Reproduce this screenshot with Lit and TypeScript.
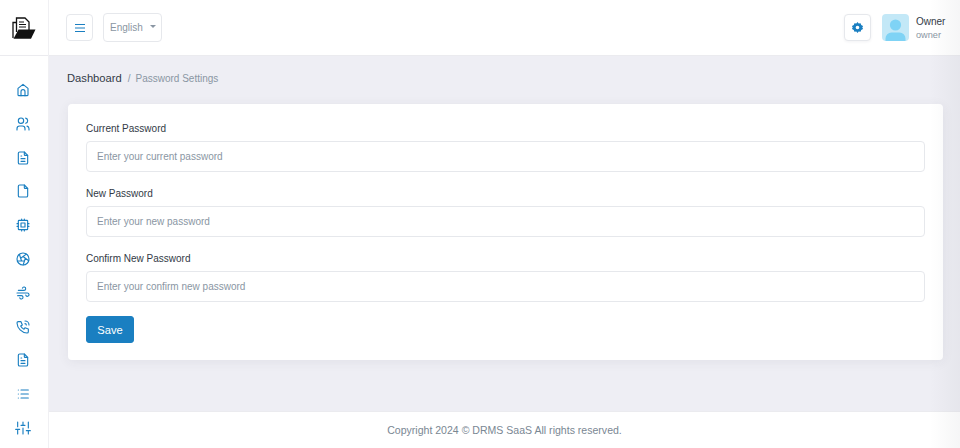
import { LitElement, html, css, svg } from 'lit';
import { customElement } from 'lit/decorators.js';

const fileText = svg`<path d="M14 3v4a1 1 0 0 0 1 1h4"/><path d="M17 21H7a2 2 0 0 1-2-2V5a2 2 0 0 1 2-2h7l5 5v11a2 2 0 0 1-2 2z"/><path d="M9 9h1M9 13h6M9 17h6"/>`;

// sidebar icons, 24 unit stroke paths
const navIcons = [
  svg`<path d="M12 3.500 4.500 9.500V19A1.500 1.500 0 0 0 6 20.500h12a1.500 1.500 0 0 0 1.500-1.500V9.500z"/><path d="M9 20.500v-6a3 3 0 0 1 6 0v6"/>`,
  svg`<circle cx="9" cy="7" r="4"/><path d="M3 21v-2a4 4 0 0 1 4-4h4a4 4 0 0 1 4 4v2"/><path d="M16 3.130a4 4 0 0 1 0 7.750"/><path d="M21 21v-2a4 4 0 0 0-3-3.850"/>`,
  fileText,
  svg`<path d="M14 3v4a1 1 0 0 0 1 1h4"/><path d="M17 21H7a2 2 0 0 1-2-2V5a2 2 0 0 1 2-2h7l5 5v11a2 2 0 0 1-2 2z"/>`,
  svg`<rect x="5" y="5" width="14" height="14" rx="1"/><path d="M9 9h6v6H9z"/><path d="M3 10h2M3 14h2M10 3v2M14 3v2M21 10h-2M21 14h-2M14 21v-2M10 21v-2"/>`,
  svg`<circle cx="12" cy="12" r="9"/><path d="M3.600 15h10.550M6.551 4.938l3.260 10.034M17.032 4.636l-8.535 6.201M20.559 14.510l-8.535-6.201M12.257 20.916l3.261-10.034"/>`,
  svg`<path d="M5 8h8.500a2.500 2.500 0 1 0-2.340-3.240"/><path d="M3 12h15.500a2.500 2.500 0 1 1-2.340 3.240"/><path d="M4 16h5.500a2.500 2.500 0 1 1-2.340 3.240"/>`,
  svg`<path d="M5 4h4l2 5-2.500 1.500a11 11 0 0 0 5 5l1.500-2.500 5 2v4a2 2 0 0 1-2 2A16 16 0 0 1 3 6a2 2 0 0 1 2-2"/><path d="M15 7a2 2 0 0 1 2 2M15 3a6 6 0 0 1 6 6"/>`,
  fileText,
  svg`<path d="M9 6h11M9 12h11M9 18h11M5 6v.010M5 12v.010M5 18v.010"/>`,
  svg`<path d="M4 21v-7M4 10V3M12 21v-9M12 8V3M20 21v-5M20 12V3M1 14h6M9 8h6M17 16h6"/>`,
];

const fields = [
  { label: 'Current Password', hint: 'Enter your current password' },
  { label: 'New Password', hint: 'Enter your new password' },
  { label: 'Confirm New Password', hint: 'Enter your confirm new password' },
];

@customElement('app-root')
export class AppRoot extends LitElement {
  static styles = css`
    :host {
      display: block;
      position: relative;
      width: 960px;
      height: 448px;
      overflow: hidden;
      font-family: 'Liberation Sans', Arial, sans-serif;
      background: #eeeef4;
    }
    * {
      box-sizing: border-box;
    }
    .layout {
      display: flex;
      height: 448px;
    }

    .sidebar {
      width: 49px;
      flex: none;
      background: #fff;
      border-right: 1px solid #f0f0f3;
      display: flex;
      flex-direction: column;
    }
    .brand {
      height: 56px;
      flex: none;
      border-bottom: 1px solid #ebebef;
      display: flex;
      align-items: center;
      justify-content: center;
    }
    .brand svg {
      width: 24px;
      height: 22px;
    }
    .nav {
      display: flex;
      flex-direction: column;
      align-items: center;
      gap: 17.800px;
      padding-top: 26px;
      padding-right: 3px;
    }
    .nav svg {
      width: 16px;
      height: 16px;
      fill: none;
      stroke: #1a7fc1;
      stroke-width: 1.700;
      stroke-linecap: round;
      stroke-linejoin: round;
      display: block;
    }

    .main {
      flex: 1;
      min-width: 0;
      display: flex;
      flex-direction: column;
    }
    .topbar {
      height: 56px;
      flex: none;
      background: #fff;
      border-bottom: 1px solid #ebebef;
      display: flex;
      align-items: center;
      padding: 0 15px 0 17px;
    }
    .menu {
      width: 27px;
      height: 27px;
      border: 1px solid #e6e8ec;
      border-radius: 4px;
      background: #fff;
      display: flex;
      align-items: center;
      justify-content: center;
      padding: 0;
    }
    .menu svg {
      width: 12px;
      height: 10px;
      stroke: #1a7fc1;
      stroke-width: 1.200;
    }
    .lang {
      margin-left: 10px;
      width: 59px;
      height: 29px;
      border: 1px solid #e6e8ec;
      border-radius: 4px;
      display: flex;
      align-items: center;
      padding-left: 6px;
      font-size: 10px;
      color: #8a96a3;
    }
    .caret {
      width: 0;
      height: 0;
      margin: -3px 0 0 7px;
      border-left: 3.500px solid transparent;
      border-right: 3.500px solid transparent;
      border-top: 3.500px solid #8a96a3;
    }
    .spacer {
      flex: 1;
    }
    .gear {
      width: 27px;
      height: 27px;
      border: 1px solid #e6e8ec;
      border-radius: 4px;
      background: #fff;
      display: flex;
      align-items: center;
      justify-content: center;
      box-shadow: 0 1px 3px rgba(30, 40, 60, 0.06);
    }
    .gear svg {
      width: 11px;
      height: 11px;
    }
    .avatar {
      width: 27px;
      height: 27px;
      margin-left: 11px;
      border-radius: 4px;
      background: #c3e8f7;
      overflow: hidden;
    }
    .avatar svg {
      display: block;
      width: 27px;
      height: 27px;
    }
    .user {
      margin-left: 7px;
      width: 29px;
      white-space: nowrap;
    }
    .user .name {
      font-size: 10px;
      line-height: 13px;
      color: #323a46;
    }
    .user .role {
      font-size: 9.200px;
      line-height: 11px;
      margin-top: 2px;
      color: #8a96a3;
    }

    .content {
      flex: 1;
      min-height: 0;
      padding: 0 17px 0 19px;
    }
    .crumbs {
      display: flex;
      align-items: baseline;
      height: 48px;
      padding-top: 16px;
      margin-left: -1px;
      font-size: 11.200px;
      color: #323a46;
    }
    .crumbs .sep {
      margin: 0 5px 0 6px;
      font-size: 10px;
      color: #8a96a3;
    }
    .crumbs .here {
      font-size: 10px;
      color: #8a96a3;
    }
    .card {
      background: #fff;
      border-radius: 4px;
      height: 256px;
      padding: 18px 18px;
      box-shadow: 0 2px 12px rgba(50, 58, 70, 0.07);
    }
    .field {
      margin-bottom: 15px;
    }
    .field:last-of-type {
      margin-bottom: 14px;
    }
    label {
      display: block;
      font-size: 10px;
      line-height: 13px;
      height: 12px;
      margin-bottom: 7px;
      color: #323a46;
    }
    .input {
      height: 31px;
      border: 1px solid #e6e8ec;
      border-radius: 4px;
      padding: 0 10px;
      display: flex;
      align-items: center;
      font-size: 10px;
      color: #8a96a3;
    }
    .save {
      width: 48px;
      height: 27px;
      background: #1a7fc1;
      border: 1px solid #1a7fc1;
      border-radius: 3px;
      color: #fff;
      font: 11.200px 'Liberation Sans', Arial, sans-serif;
      padding: 0;
      display: block;
    }
    .footer {
      height: 37px;
      flex: none;
      background: #fff;
      border-top: 1px solid #ebebef;
      display: flex;
      align-items: center;
      justify-content: center;
      font-size: 10.550px;
      color: #7a8793;
    }

    /* soft shade down the right edge of the page */
    .edge {
      position: absolute;
      top: 0;
      right: 0;
      bottom: 0;
      width: 30px;
      pointer-events: none;
      background: linear-gradient(to right, rgba(120, 125, 135, 0), rgba(120, 125, 135, 0.07));
    }
  `;

  render() {
    return html`
      <div class="layout">
        <aside class="sidebar">
          <div class="brand">
            <svg viewBox="12 16 24 22">
              <path d="M13 37V21.500h3.500" fill="none" stroke="#111" stroke-width="1.300" />
              <path d="M16.500 31V17h8.500l4 4v8" fill="#fff" stroke="#111" stroke-width="1.300" />
              <path d="M19 21h5M19 23.500h7M19 26h7" fill="none" stroke="#111" stroke-width="1" />
              <path d="M13.500 37.800 18.500 28.500H35.500L31 37.800z" fill="#111" />
            </svg>
          </div>
          <nav class="nav">
            ${navIcons.map((icon) => html`<svg viewBox="0 0 24 24">${icon}</svg>`)}
          </nav>
        </aside>
        <div class="main">
          <header class="topbar">
            <button class="menu">
              <svg viewBox="0 0 12 10"><path d="M1 1.500h10M1 5h10M1 8.500h10" /></svg>
            </button>
            <div class="lang">English<span class="caret"></span></div>
            <div class="spacer"></div>
            <div class="gear">
              <svg viewBox="0 0 24 24">
                <path
                  fill-rule="evenodd"
                  fill="#1a7fc1"
                  d="M12 0l2.600 3.300 4.100-.7 1.400 4 4 2.400-1.700 3 1.700 3-4 2.400-1.400 4-4.100-.7L12 24l-2.600-3.300-4.100.7-1.400-4-4-2.400 1.700-3-1.700-3 4-2.400 1.400-4 4.100.7zM12 8a4 4 0 1 0 0 8 4 4 0 0 0 0-8z"
                />
              </svg>
            </div>
            <div class="avatar">
              <svg viewBox="0 0 27 27">
                <circle cx="13.500" cy="11" r="5.600" fill="#7fd3f5" />
                <path d="M3.500 27v-2.500a6 6 0 0 1 6-6h8a6 6 0 0 1 6 6V27z" fill="#7fd3f5" />
              </svg>
            </div>
            <div class="user">
              <div class="name">Owner</div>
              <div class="role">owner</div>
            </div>
          </header>
          <main class="content">
            <div class="crumbs">
              <span>Dashboard</span><span class="sep">/</span><span class="here">Password Settings</span>
            </div>
            <section class="card">
              ${fields.map(
                (f) => html`
                  <div class="field">
                    <label>${f.label}</label>
                    <div class="input">${f.hint}</div>
                  </div>
                `
              )}
              <button class="save">Save</button>
            </section>
          </main>
          <footer class="footer">Copyright 2024 © DRMS SaaS All rights reserved.</footer>
        </div>
      </div>
      <div class="edge"></div>
    `;
  }
}
